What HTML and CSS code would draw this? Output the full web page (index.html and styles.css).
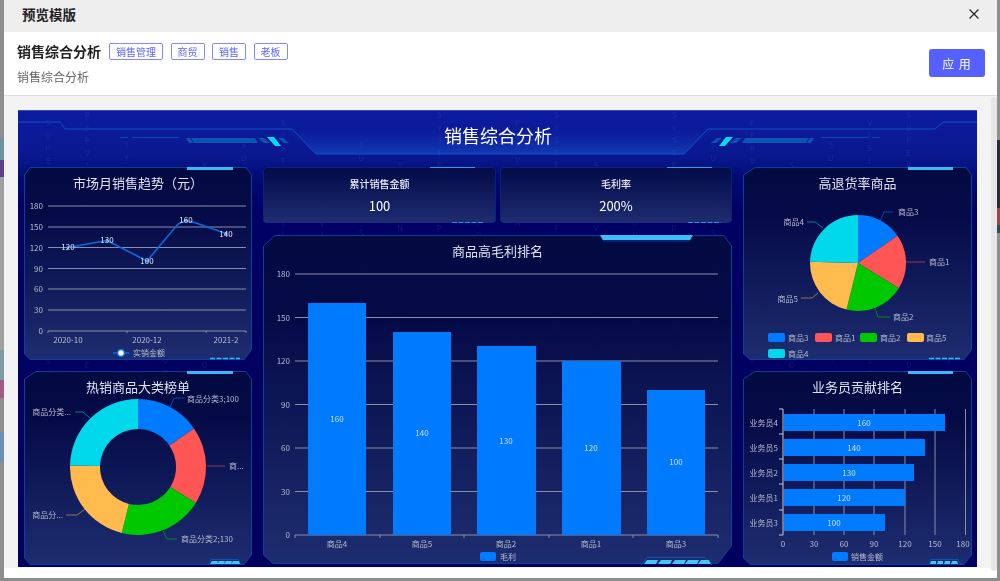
FILE: index.html
```html
<!DOCTYPE html>
<html lang="zh">
<head>
<meta charset="utf-8">
<title>预览模版</title>
<link rel="stylesheet" href="styles.css">
</head>
<body>
<div class="page">
  <div class="edge edge-left"><i class="e1"></i><i class="e2"></i><i class="e3"></i><i class="e4"></i><i class="e5"></i><i class="e6"></i><i class="e7"></i><i class="e8"></i></div>
  <main class="modal">
    <header class="modal-head">
      <h1>预览模版</h1>
      <svg class="close" viewBox="0 0 10 10"><path d="M0.5 0.5L9.5 9.5M9.5 0.5L0.5 9.5"/></svg>
    </header>
    <section class="info">
      <div>
        <div class="info-title">
          <h2>销售综合分析</h2>
          <span class="tag">销售管理</span><span class="tag">商贸</span><span class="tag">销售</span><span class="tag">老板</span>
        </div>
        <p>销售综合分析</p>
      </div>
      <button class="apply">应 用</button>
    </section>
    <div class="body">
      <div class="dash">
        <div class="rain">
          <span>SUPERVISION SYSTEM SUPER</span><span>PERVISION SYSTEM SUPERVISION</span><span>SYSTEM SUPERVISION SYSTEM</span><span>ISION SYSTEM SUPERVISION</span><span>VISION SUPERVISION SYSTEM</span><span>SUPERVISION SYSTEM SUPER</span><span>SYSTEM SYSTEM SUPERVISION</span><span>PERVISION SUPERVISION</span><span>SUPERVISION SYSTEM SYSTEM</span><span>VISION SYSTEM SUPERVISION</span><span>SYSTEM SUPERVISION SYSTEM</span><span>SUPERVISION SYSTEM SUPER</span><span>PERVISION SYSTEM SUPERVISION</span><span>SYSTEM SUPERVISION</span><span>SUPERVISION SYSTEM SUPER</span><span>ISION SYSTEM SUPERVISION</span><span>SYSTEM SUPERVISION SYSTEM</span><span>SUPERVISION SYSTEM SUPER</span><span>PERVISION SYSTEM SUPERVISION</span><span>SYSTEM SUPERVISION SYSTEM</span><span>SUPERVISION SYSTEM</span><span>VISION SUPERVISION SYSTEM</span><span>SUPERVISION SYSTEM SUPER</span><span>SYSTEM SUPERVISION</span>
        </div>
        <svg class="dash-deco" viewBox="18 110 959 57">
          <defs>
            <linearGradient id="glow" x1="0" y1="0" x2="0" y2="1"><stop offset="0" stop-color="#1a55d8" stop-opacity="0"/><stop offset="1" stop-color="#1a60e0" stop-opacity=".45"/></linearGradient>
            <linearGradient id="edgeLine" x1="0" y1="0" x2="1" y2="0"><stop offset="0" stop-color="#1254c8"/><stop offset=".5" stop-color="#6ab4ff"/><stop offset="1" stop-color="#1254c8"/></linearGradient>
            <g id="dec">
              <path class="dl" d="M120 137.5H128M132 137.5H179"/>
              <path class="bar1" d="M186 138H190L193 143H189ZM191 138H255L258 143H194Z"/>
              <path class="bar1" d="M258 138H264L270 143H264Z"/>
              <path class="bar1" d="M278 138H283L289 143H284Z"/>
              <path class="cy" d="M267 137H274L281 146H275Z"/>
            </g>
          </defs>
          <path class="glowp" d="M292 129L316 154H684L708 129Z"/>
          <path class="hl" d="M18 122H60L65 129H292L316 154H684L708 129H935L943 122H977"/>
          <path class="hb" d="M316 154H684"/>
          <use href="#dec"/>
          <use href="#dec" transform="translate(1000 0) scale(-1 1)"/>
        </svg>
        <div class="dash-title">销售综合分析</div>
        <div class="grid">

          <section class="panel p-line">
            <h3>市场月销售趋势（元）</h3>
            <svg viewBox="24 167 228 193">
              <defs>
                <linearGradient id="pf" x1="0" y1="0" x2="0" y2="1"><stop offset="0" stop-color="#030a3f" stop-opacity=".95"/><stop offset=".25" stop-color="#050b45" stop-opacity=".95"/><stop offset="1" stop-color="#1f2f70" stop-opacity=".96"/></linearGradient>
              </defs>
              <path class="pb" d="M30 167.5H240L246 167.5L251.5 175V350L244 359.5H30L24.5 354V175Z"/>
              <path class="tab" d="M187 167H233V170H187Z"/>
              <path class="dash5" d="M210 358.5H240"/>
              <path class="gl" d="M48 206H246M48 227H246M48 247.5H246M48 268.5H246M48 289H246M48 310H246M48 331H246"/>
              <path class="gl" d="M48 331V333M127 331V333M206 331V333M246 331V333"/>
              <g class="ax ae">
                <text x="43" y="209">180</text><text x="43" y="230">150</text><text x="43" y="251">120</text><text x="43" y="272">90</text><text x="43" y="292">60</text><text x="43" y="313">30</text><text x="43" y="334">0</text>
              </g>
              <g class="ax am">
                <text x="68" y="343">2020-10</text><text x="147" y="343">2020-12</text><text x="226" y="343">2021-2</text>
              </g>
              <path class="ln" d="M68 247.5L107 240.5L147 261L178 224Q186 219 196 223L226 233.5"/>
              <g class="pt"><circle cx="68" cy="247.5" r="1.5"/><circle cx="107" cy="240.5" r="1.5"/><circle cx="147" cy="261" r="1.5"/><circle cx="186" cy="220" r="1.5"/><circle cx="226" cy="233.5" r="1.5"/></g>
              <g class="ax am lab">
                <text x="68" y="250">120</text><text x="107" y="243">130</text><text x="147" y="264">100</text><text x="186" y="223">160</text><text x="226" y="237">140</text>
              </g>
              <path class="ln" d="M113 353H129"/>
              <circle class="lgd" cx="121" cy="353" r="3.5"/>
              <text class="ax" x="133" y="356">实销金额</text>
            </svg>
          </section>

          <div class="center">
            <div class="kpis">
              <section class="panel kpi">
                <svg viewBox="263 167 233 56">
                  <defs><linearGradient id="kf" x1="0" y1="0" x2="0" y2="1"><stop offset="0" stop-color="#030a44" stop-opacity=".92"/><stop offset="1" stop-color="#1f2f72" stop-opacity=".96"/></linearGradient></defs>
                  <path class="kb" d="M266 167.5H493L495.5 170V221L492 223H266L263.5 221V170Z"/>
                  <path class="tab2" d="M430 167.5H475"/>
                  <path class="dash5" d="M452 223H484"/>
                </svg>
                <h4>累计销售金额</h4>
                <strong>100</strong>
              </section>
              <section class="panel kpi">
                <svg viewBox="500 167 232 56">
                  <path class="kb" d="M503 167.5H729L731.5 170V221L728 223H503L500.5 221V170Z"/>
                  <path class="tab2" d="M667 167.5H712"/>
                  <path class="dash5" d="M688 223H721"/>
                </svg>
                <h4>毛利率</h4>
                <strong>200%</strong>
              </section>
            </div>
            <section class="panel p-main">
              <h3>商品高毛利排名</h3>
              <svg viewBox="263 235 469 330">
                <path class="pb" d="M275 235.5H600L604 241H689L694 235.5H724L731.5 246V546L718 563.5H273L263.5 555V246Z"/>
                <path class="tabm" d="M600 235H693L690 240H603Z"/>
                <g class="gl">
                  <path d="M295 274H718M295 317.5H718M295 361H718M295 404.5H718M295 448H718M295 491.5H718M295 535H718"/>
                  <path d="M295 535V538M380 535V538M464 535V538M549 535V538M633 535V538M718 535V538"/>
                </g>
                <g class="ax ae">
                  <text x="290" y="277">180</text><text x="290" y="321">150</text><text x="290" y="364">120</text><text x="290" y="408">90</text><text x="290" y="451">60</text><text x="290" y="495">30</text><text x="290" y="538">0</text>
                </g>
                <g class="blue">
                  <rect x="308" y="303" width="58" height="232"/><rect x="393" y="332" width="58" height="203"/><rect x="477" y="346" width="59" height="189"/><rect x="562" y="361" width="59" height="174"/><rect x="647" y="390" width="58" height="145"/>
                </g>
                <g class="ax am bl">
                  <text x="337" y="422">160</text><text x="422" y="436">140</text><text x="506" y="444">130</text><text x="591" y="451">120</text><text x="676" y="465">100</text>
                </g>
                <g class="ax am">
                  <text x="337" y="547">商品4</text><text x="422" y="547">商品5</text><text x="506" y="547">商品2</text><text x="591" y="547">商品1</text><text x="676" y="547">商品3</text>
                </g>
                <rect class="blue" x="480" y="552" width="16" height="9" rx="2"/>
                <text class="ax" x="500" y="560">毛利</text>
                <path class="tabb" d="M641 565L647 557.5H705L712 565"/>
                <path class="stripe" d="M644 564L647 560H658L656 564ZM658 564L661 560H672L670 564ZM672 564L675 560H686L684 564ZM685 564L688 560H699L697 564ZM698 564L701 560H709L711 564Z"/>
              </svg>
            </section>
          </div>

          <section class="panel p-pie">
            <h3>高退货率商品</h3>
            <svg viewBox="743 167 229 193">
              <path class="pb" d="M755 167.5H966L971.5 175V350L964 359.5H750L743.5 354V175Z"/>
              <path class="tab" d="M908 167H953V170H908Z"/>
              <path class="dash5" d="M929 358.5H961"/>
              <path class="c1" d="M858 263V215A48 48 0 0 1 897.5 235.7Z"/>
              <path class="c2" d="M858 263L897.5 235.7A48 48 0 0 1 898.8 288.3Z"/>
              <path class="c3" d="M858 263L898.8 288.3A48 48 0 0 1 846.5 309.6Z"/>
              <path class="c4" d="M858 263L846.5 309.6A48 48 0 0 1 810 261.8Z"/>
              <path class="c5" d="M858 263L810 261.8A48 48 0 0 1 858 215Z"/>
              <path class="l1" d="M880 221L884 212H893"/>
              <path class="l2" d="M906 262H925"/>
              <path class="l3" d="M875 308L878 317H890"/>
              <path class="l4" d="M818 293L812 298H801"/>
              <path class="l5" d="M823 228L815 222H807"/>
              <text class="ax" x="898" y="215">商品3</text>
              <text class="ax" x="929" y="265">商品1</text>
              <text class="ax" x="893" y="320">商品2</text>
              <text class="ax ae" x="798" y="302">商品5</text>
              <text class="ax ae" x="804" y="225">商品4</text>
              <rect class="c1" x="768" y="333" width="17" height="9" rx="2"/><text class="ax" x="788" y="340.5">商品3</text>
              <rect class="c2" x="815" y="333" width="17" height="9" rx="2"/><text class="ax" x="835" y="340.5">商品1</text>
              <rect class="c3" x="860" y="333" width="17" height="9" rx="2"/><text class="ax" x="880" y="340.5">商品2</text>
              <rect class="c4" x="907" y="333" width="17" height="9" rx="2"/><text class="ax" x="926" y="340.5">商品5</text>
              <rect class="c5" x="768" y="349" width="17" height="9" rx="2"/><text class="ax" x="788" y="356.5">商品4</text>
            </svg>
          </section>

          <section class="panel p-donut">
            <h3>热销商品大类榜单</h3>
            <svg viewBox="24 371 228 194">
              <path class="pb" d="M36 371.5H240L246 371.5L251.5 379V555L244 564.5H30L24.5 558V379Z"/>
              <path class="tab" d="M187 371H233V374H187Z"/>
              <path class="tabb" d="M208 565L211 559.5H238L241 565"/>
              <path class="stripe" d="M210 564L212 561H218L217 564ZM217 564L219 561H225L224 564ZM224 564L226 561H232L231 564ZM231 564L233 561H239L240 564Z"/>
              <path class="c1" d="M138 399A68 68 0 0 1 194 428.4L169.3 445.4A38 38 0 0 0 138 429Z"/>
              <path class="c2" d="M194 428.4A68 68 0 0 1 195.8 502.9L170.3 487.1A38 38 0 0 0 169.3 445.4Z"/>
              <path class="c3" d="M195.8 502.9A68 68 0 0 1 121.7 533L128.9 503.9A38 38 0 0 0 170.3 487.1Z"/>
              <path class="c4" d="M121.7 533A68 68 0 0 1 70 465.4L100 466.1A38 38 0 0 0 128.9 503.9Z"/>
              <path class="c5" d="M70 465.4A68 68 0 0 1 138 399V429A38 38 0 0 0 100 466.1Z"/>
              <path class="l1" d="M170 407L174 398H184"/>
              <path class="l2" d="M207 466H225"/>
              <path class="l3" d="M163 531L167 539H177"/>
              <path class="l4" d="M85 509L77 515H66"/>
              <path class="l5" d="M90 418L83 412H75"/>
              <text class="ax" x="187" y="402">商品分类3;100</text>
              <text class="ax" x="229" y="469">商...</text>
              <text class="ax" x="181" y="542">商品分类2;130</text>
              <text class="ax ae" x="63" y="518">商品分...</text>
              <text class="ax ae" x="71" y="415">商品分类...</text>
            </svg>
          </section>

          <section class="panel p-hbar">
            <h3>业务员贡献排名</h3>
            <svg viewBox="743 371 229 194">
              <path class="pb" d="M755 371.5H966L971.5 379V555L964 564.5H750L743.5 558V379Z"/>
              <path class="tab" d="M908 371H953V374H908Z"/>
              <path class="tabb" d="M928 565L931 559.5H958L961 565"/>
              <path class="stripe" d="M930 564L931 561H936L936 564ZM937 564L938 561H943L943 564ZM944 564L945 561H950L950 564ZM951 564L952 561H957L958 564Z"/>
              <path class="gl" d="M814 409V535M844 409V535M874 409V535M905 409V535M935 409V535M965.500 409V535"/>
              <path class="gl2" d="M783 409V535M779 409H783M779 434H783M779 459H783M779 484H783M779 510H783M779 535H783"/>
              <g class="blue">
                <rect x="784" y="414" width="161" height="17"/><rect x="784" y="439" width="141" height="17"/><rect x="784" y="464" width="130" height="17"/><rect x="784" y="489" width="121" height="17"/><rect x="784" y="514" width="101" height="17"/>
              </g>
              <g class="ax am bl">
                <text x="864" y="426">160</text><text x="854" y="451">140</text><text x="849" y="476">130</text><text x="844" y="501">120</text><text x="834" y="526">100</text>
              </g>
              <g class="ax ae">
                <text x="778" y="426">业务员4</text><text x="778" y="451">业务员5</text><text x="778" y="476">业务员2</text><text x="778" y="501">业务员1</text><text x="778" y="526">业务员3</text>
              </g>
              <g class="ax am">
                <text x="783" y="547">0</text><text x="814" y="547">30</text><text x="844" y="547">60</text><text x="874" y="547">90</text><text x="905" y="547">120</text><text x="935" y="547">150</text><text x="963" y="547">180</text>
              </g>
              <rect class="blue" x="832" y="552" width="16" height="9" rx="2"/>
              <text class="ax" x="851" y="560">销售金额</text>
            </svg>
          </section>

        </div>
      </div>
      <div class="scrollbar"></div>
    </div>
  </main>
  <div class="edge edge-right"><i class="r1"></i><i class="r2"></i><i class="r3"></i><i class="r4"></i></div>
</div>
</body>
</html>
```
FILE: styles.css
```css
* { box-sizing: border-box; margin: 0; padding: 0; }
html, body { width: 1000px; height: 581px; overflow: hidden; }
body { font-family: "Noto Sans CJK SC", "Liberation Sans", sans-serif; background: #8c8c8c; }
.page { display: flex; width: 1000px; height: 578px; filter: blur(.35px); }
.edge { width: 4px; flex: none; background: #8e8e8e; display: flex; flex-direction: column; }
.edge-right { width: 3px; }
.edge i { display: block; }
.e1 { height: 138px; }
.e2 { height: 22px; background: #6f929e; }
.e3 { height: 17px; background: #5c3f8e; }
.e4 { height: 173px; background: #a0a0a0; }
.e5 { height: 30px; background: #7f9ba5; }
.e6 { height: 18px; background: #a35b80; }
.e7 { height: 34px; }
.e8 { height: 30px; background: #6d8fb5; }
.r1 { height: 140px; }
.r2 { height: 68px; background: #2c2c36; }
.r3 { height: 17px; background: #9a4545; }
.r4 { height: 8px; background: #2e4a52; }

.modal { flex: 1; display: flex; flex-direction: column; background: #fff; padding-bottom: 10px; min-width: 0; }
.modal-head { height: 32px; flex: none; background: #eeeeee; display: flex; align-items: center; justify-content: space-between; padding: 0 18px 4px 18px; }
.modal-head h1 { font-size: 13.5px; font-weight: 700; color: #222; }
.close { width: 10px; height: 10px; }
.close path { stroke: #222; stroke-width: 1.2; fill: none; }

.info { height: 64px; flex: none; display: flex; align-items: flex-start; justify-content: space-between; padding: 9px 12px 0 13px; border-bottom: 1px solid #dfdfdf; }
.info-title { display: flex; align-items: center; height: 21px; }
.info-title h2 { font-size: 14px; font-weight: 700; color: #222; margin-right: 8px; line-height: 21px; }
.tag { font-size: 10px; line-height: 15px; height: 17px; padding: 0 6px; border: 1px solid #8289ff; border-radius: 2px; color: #5b64ff; margin-right: 7.5px; }
.info p { font-size: 12px; color: #666; margin-top: 6px; line-height: 17px; }
.apply { margin-top: 8px; width: 56px; height: 28px; border: none; border-radius: 3px; background: #5560ff; color: #fff; font: 12px "Noto Sans CJK SC", sans-serif; letter-spacing: 1px; }

.body { flex: 1; display: flex; align-items: flex-start; background: #f3f3f3; padding: 1px 0 0 14px; min-height: 0; }
.dash { position: relative; overflow: hidden; width: 959px; height: 457px; margin-top: 13px; flex: none; padding: 0 5px 2px 6px; background: linear-gradient(#0c1ca0 0, #0a188f 10%, #000a72 15%, #000064 22%, #00005e 100%); border-top: 1px solid #3a4cc0; }
.rain { position: absolute; inset: 0; display: flex; justify-content: space-around; padding: 0 10px; }
.rain span { writing-mode: vertical-rl; text-orientation: upright; font-size: 8px; letter-spacing: 4.5px; line-height: 10px; color: rgba(130, 160, 255, .13); white-space: nowrap; }
.rain span:nth-child(3n) { margin-top: 30px; }
.rain span:nth-child(3n+1) { margin-top: 8px; }
.rain span:nth-child(4n) { margin-top: 70px; }
.rain span:nth-child(5n) { margin-top: 50px; }

.dash-deco { position: absolute; left: 0; top: -1px; width: 959px; height: 57px; }
.hl { fill: none; stroke: #1450c0; stroke-width: 1; }
.hb { fill: none; stroke: url(#edgeLine); stroke-width: 2; }
.glowp { fill: url(#glow); }
.dl { fill: none; stroke: #0d4cae; stroke-width: 1; }
.bar1 { fill: #0b55b0; }
.cy { fill: #00dcf0; }
.dash-title { position: relative; height: 56px; text-align: center; padding: 11px 0 0 0; font-size: 18px; line-height: 26px; font-weight: 400; color: #fff; }

.grid { position: relative; display: grid; grid-template-columns: 228px 469px 229px; grid-template-rows: 193px 194px; gap: 11px; }
.center { grid-column: 2; grid-row: 1 / 3; display: flex; flex-direction: column; gap: 12px; }
.p-line { grid-column: 1; grid-row: 1; }
.p-donut { grid-column: 1; grid-row: 2; }
.p-pie { grid-column: 3; grid-row: 1; }
.p-hbar { grid-column: 3; grid-row: 2; }

.panel { position: relative; text-align: center; }
.panel > svg { position: absolute; inset: 0; width: 100%; height: 100%; }
.panel h3 { position: relative; z-index: 1; font-size: 13px; font-weight: 400; line-height: 18px; padding-top: 7px; color: #dfe2ee; }
.p-main { flex: 1; }
.kpis { display: flex; gap: 4px; height: 56px; }
.kpi { width: 233px; padding-top: 10px; }
.kpi + .kpi { width: 232px; }
.kpi h4 { position: relative; font-size: 10px; line-height: 14px; font-weight: 500; color: #e8eaf4; }
.kpi strong { position: relative; display: block; margin-top: 6px; font-size: 13px; line-height: 18px; font-weight: 400; color: #fff; }

.pb { fill: url(#pf); stroke: #0e3f9c; stroke-width: 1; }
.kb { fill: url(#kf); stroke: #0e2f8c; stroke-width: .6; }
.tab { fill: #3bb8f5; }
.tab2 { stroke: #2a9fe8; stroke-width: 1; fill: none; }
.tabm { fill: #3fbdf8; }
.tabb { fill: none; stroke: #1050b4; stroke-width: 1; }
.dash5 { fill: none; stroke: #22c0ee; stroke-width: 1.5; stroke-dasharray: 5 1.5; }
.stripe { fill: #45c4f6; }
.gl { fill: none; stroke: #8a8ea8; stroke-width: 1; }
.gl2 { fill: none; stroke: #c8cbd8; stroke-width: 1; }
.ax { font-size: 8px; fill: #b9bcd0; }
.ae { text-anchor: end; }
.am { text-anchor: middle; }
.lab { fill: #e2e4ee; }
.bl { fill: #cfe0ff; }
.ln { fill: none; stroke: #0a6be0; stroke-width: 1.6; }
.pt circle { fill: #3f9cff; }
.lgd { fill: #fff; stroke: #0a6be0; stroke-width: 1.6; }
.blue { fill: #007bff; }
.c1 { fill: #007bff; }
.c2 { fill: #ff5555; }
.c3 { fill: #00c800; }
.c4 { fill: #ffbb4d; }
.c5 { fill: #00d8ec; }
.l1, .l2, .l3, .l4, .l5 { fill: none; stroke-width: 1; opacity: .55; }
.l1 { stroke: #007bff; }
.l2 { stroke: #ff5555; }
.l3 { stroke: #00c800; }
.l4 { stroke: #ffbb4d; }
.l5 { stroke: #00d8ec; }

.scrollbar { width: 6px; height: 474px; margin-left: 14px; background: #e6e6e6; border-radius: 3px; }
```
